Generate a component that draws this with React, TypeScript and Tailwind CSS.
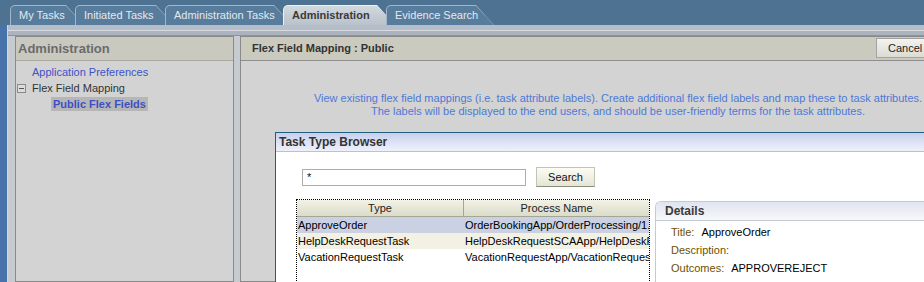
import clsx from "clsx";

const tabs = [
  { label: "My Tasks", w: "w-[74px]" },
  { label: "Initiated Tasks", w: "w-[99px]" },
  { label: "Administration Tasks", w: "w-[127px]" },
  { label: "Administration", w: "w-[112px]", active: true },
  { label: "Evidence Search", w: "w-[108px]" },
];

const rows = [
  { type: "ApproveOrder", process: "OrderBookingApp/OrderProcessing/1.0", bg: "bg-[#c9d1e3]" },
  { type: "HelpDeskRequestTask", process: "HelpDeskRequestSCAApp/HelpDeskRequestProcess", bg: "bg-[#f3f1e3]" },
  { type: "VacationRequestTask", process: "VacationRequestApp/VacationRequestProcess", bg: "bg-white" },
];

const Tab = ({ label, w, active, first }: { label: string; w: string; active?: boolean; first: boolean }) => (
  <div
    className={clsx(
      "relative h-[20px] rounded-tl-[5px] [clip-path:polygon(0_0,calc(100%_-_18px)_0,100%_100%,0_100%)]",
      w,
      active ? "bg-[#eef1f4]" : "bg-[#a3b7c8]",
      !first && "-ml-[9px]"
    )}
  >
    <div
      className={clsx(
        "absolute left-[1px] top-[1px] right-0 bottom-0 rounded-tl-[4px] pl-[8px] leading-[19px] whitespace-nowrap [clip-path:polygon(0_0,calc(100%_-_18px)_0,100%_100%,0_100%)]",
        active
          ? "bg-gradient-to-b from-[#d2d8de] to-[#b9c2cb] font-bold text-[#3a3a3a]"
          : "bg-[#587c9b] text-[#e2eaf1]"
      )}
    >
      {label}
    </div>
  </div>
);

export default function App() {
  return (
    <div className="relative w-[924px] h-[282px] overflow-hidden bg-[#4e7292] font-['Liberation_Sans',Arial,sans-serif] text-[11px]">
      {/* tab band */}
      <div className="flex h-[25px] pt-[5px] pl-[10px]">
        {tabs.map((t, i) => (
          <Tab key={t.label} label={t.label} w={t.w} active={t.active} first={i === 0} />
        ))}
      </div>

      <div className="flex h-[257px]">
        <div className="w-[7px] shrink-0 bg-[#4773aa]" />
        <div className="flex-1 min-w-0 flex flex-col bg-[#c6cbd0] border-l border-[#d2d7dc]">
          {/* strip under tabs */}
          <div className="h-[11px] bg-[#b5bec8] flex flex-col">
            <div className="h-[5px]" />
            <div className="h-[1px] bg-[#d6dce2]" />
            <div className="flex-1 bg-[#abb4be] border-b border-[#8d939a]" />
          </div>

          <div className="flex flex-1 pl-[7px] gap-[6px] min-h-0">
            {/* left panel */}
            <div className="w-[219px] shrink-0 border border-[#8a8a8a] bg-[#d3d3d3] flex flex-col">
              <div className="h-[24px] bg-[#c9c9bf] border-b border-[#a9a9a0] pl-[2px] text-[13px] font-bold text-[#6b6b6b] leading-[23px]">
                Administration
              </div>
              <div className="pt-[3px]">
                <div className="h-[16px] leading-[16px] pl-[16px] text-[#3d52c9]">Application Preferences</div>
                <div className="h-[16px] flex items-center">
                  <div className="ml-[1px] w-[9px] h-[9px] border border-[#8a8a8a] bg-[#dcdcdc] flex items-center justify-center">
                    <div className="w-[5px] h-[1px] bg-[#555]" />
                  </div>
                  <span className="ml-[6px] text-[#333]">Flex Field Mapping</span>
                </div>
                <div className="h-[16px] flex items-center pl-[35px]">
                  <span className="bg-[#b6b6b6] px-[2px] leading-[14px] font-bold text-[#3d4fc4]">Public Flex Fields</span>
                </div>
              </div>
            </div>

            {/* right panel */}
            <div className="w-[756px] shrink-0 border border-[#8a8a8a] bg-[#d3d3d3] flex flex-col">
              <div className="h-[24px] bg-[#cacabe] border-b border-[#8f8f8f] flex items-center">
                <span className="pl-[11px] font-bold text-[#333]">Flex Field Mapping : Public</span>
                <div className="ml-auto mr-[57px] w-[62px] h-[20px] -mt-[1px] border border-[#a3a3a3] bg-gradient-to-b from-[#f3f3ef] to-[#dcdcd5] pl-[11px] leading-[18px] text-[#222]">
                  Cancel
                </div>
              </div>
              <div className="pt-[31px] text-center leading-[13px] text-[#4e79d6] whitespace-nowrap">
                View existing flex field mappings (i.e. task attribute labels). Create additional flex field labels and map these to task attributes.
                <br />
                The labels will be displayed to the end users, and should be user-friendly terms for the task attributes.
              </div>
            </div>
          </div>
        </div>
      </div>

      {/* Task Type Browser popup */}
      <div className="absolute left-[275px] top-[132px] w-[700px] h-[160px] bg-white border-t border-l border-[#205e80]">
        <div className="h-[19px] bg-gradient-to-b from-[#c7cfeb] via-[#dde2f5] to-[#eef0fa] border-b border-[#b8c0da] pl-[3px] leading-[19px] text-[12px] font-bold text-[#333]">
          Task Type Browser
        </div>
        <div className="flex items-center h-[20px] mt-[15px] pl-[26px]">
          <div className="w-[224px] h-[17px] border border-[#aeaea6] pl-[4px] leading-[15px] text-[#111]">*</div>
          <div className="ml-[10px] w-[59px] h-[20px] border border-[#c3c3b3] border-b-[#8d8d7b] bg-gradient-to-b from-[#fcfcf4] to-[#e4e4d6] text-center leading-[18px] text-[#111]">
            Search
          </div>
        </div>

        <div className="flex mt-[12px] pl-[20px]">
          <div className="w-[354px] h-[90px] border border-dotted border-black bg-white">
            <div className="flex h-[17px] bg-gradient-to-b from-[#f2f2e6] to-[#dcdccb] border-b border-[#a6a694] text-[#222]">
              <div className="w-[167px] text-center leading-[16px] border-r border-[#a6a694]">Type</div>
              <div className="flex-1 text-center leading-[16px]">Process Name</div>
            </div>
            {rows.map((r) => (
              <div key={r.type} className={clsx("flex h-[16px] leading-[16px] text-black", r.bg)}>
                <div className="w-[167px] pl-[1px] whitespace-nowrap overflow-hidden">{r.type}</div>
                <div className="flex-1 pl-[1px] whitespace-nowrap overflow-hidden">{r.process}</div>
              </div>
            ))}
          </div>

          <div className="ml-[5px] mt-[2px] flex-1 border-t border-l border-[#c2cad6] rounded-tl-[6px] bg-white">
            <div className="h-[19px] rounded-tl-[6px] bg-gradient-to-b from-[#dfe4ee] to-[#f7f8fb] border-b border-[#c2cad6] pl-[9px] leading-[19px] text-[12px] font-bold text-[#3a3a3a]">
              Details
            </div>
            <div className="pt-[2px] pl-[15px]">
              <div className="h-[18px] leading-[18px] flex">
                <span className="text-[#6e5000]">Title:</span>
                <span className="ml-[7px] text-black">ApproveOrder</span>
              </div>
              <div className="h-[18px] leading-[18px] text-[#6e5000]">Description:</div>
              <div className="h-[18px] leading-[18px] flex">
                <span className="text-[#6e5000]">Outcomes:</span>
                <span className="ml-[7px] text-black">APPROVEREJECT</span>
              </div>
            </div>
          </div>
        </div>
      </div>
    </div>
  );
}
